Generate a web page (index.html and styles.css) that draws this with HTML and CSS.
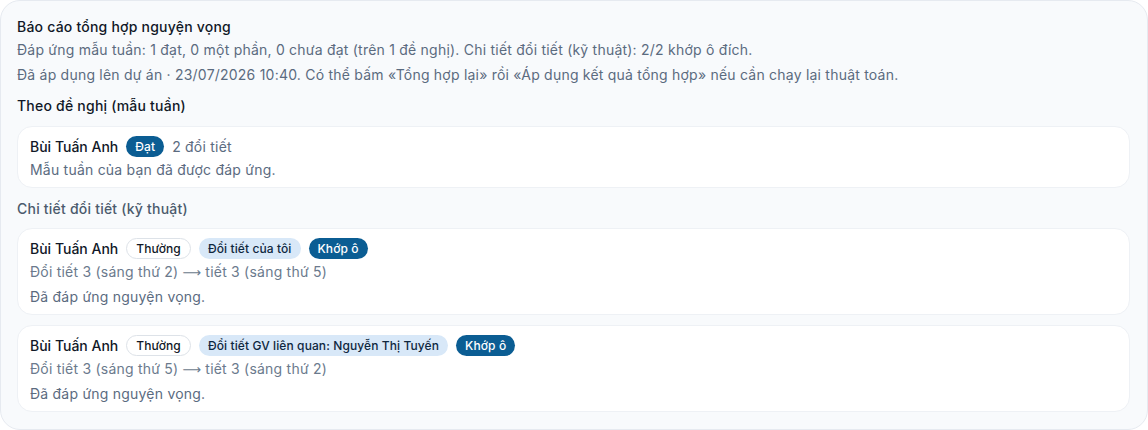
FILE: index.html
```html
<!DOCTYPE html>
<html lang="vi">
<head>
<meta charset="utf-8">
<link rel="stylesheet" href="styles.css">
</head>
<body>
<div class="panel">
  <div class="title">Báo cáo tổng hợp nguyện vọng</div>
  <div class="muted line">Đáp ứng mẫu tuần: 1 đạt, 0 một phần, 0 chưa đạt (trên 1 đề nghị). Chi tiết đổi tiết (kỹ thuật): 2/2 khớp ô đích.</div>
  <div class="muted line">Đã áp dụng lên dự án · 23/07/2026 10:40. Có thể bấm «Tổng hợp lại» rồi «Áp dụng kết quả tổng hợp» nếu cần chạy lại thuật toán.</div>
  <div class="section-title">Theo đề nghị (mẫu tuần)</div>
  <div class="card">
    <div class="row">
      <span class="name">Bùi Tuấn Anh</span>
      <span class="pill pill-dark">Đạt</span>
      <span class="count">2 đổi tiết</span>
    </div>
    <div class="muted line">Mẫu tuần của bạn đã được đáp ứng.</div>
  </div>
  <div class="section-title sub">Chi tiết đổi tiết (kỹ thuật)</div>
  <div class="card">
    <div class="row">
      <span class="name">Bùi Tuấn Anh</span>
      <span class="pill pill-outline">Thường</span>
      <span class="pill pill-light">Đổi tiết của tôi</span>
      <span class="pill pill-dark">Khớp ô</span>
    </div>
    <div class="muted line light">Đổi tiết 3 (sáng thứ 2) <span class="arrow">⟶</span> tiết 3 (sáng thứ 5)</div>
    <div class="muted line">Đã đáp ứng nguyện vọng.</div>
  </div>
  <div class="card">
    <div class="row">
      <span class="name">Bùi Tuấn Anh</span>
      <span class="pill pill-outline">Thường</span>
      <span class="pill pill-light">Đổi tiết GV liên quan: Nguyễn Thị Tuyến</span>
      <span class="pill pill-dark">Khớp ô</span>
    </div>
    <div class="muted line light">Đổi tiết 3 (sáng thứ 5) <span class="arrow">⟶</span> tiết 3 (sáng thứ 2)</div>
    <div class="muted line">Đã đáp ứng nguyện vọng.</div>
  </div>
</div>
</body>
</html>
```
FILE: styles.css
```css
* { box-sizing: border-box; }
html, body { margin: 0; padding: 0; background: #ffffff; }
body {
  font-family: Inter, "Noto Sans", sans-serif;
  font-size: 14px;
  letter-spacing: 0.22px;
  color: #111827;
}
.panel {
  width: 1148px;
  height: 430px;
  background: #f8fafc;
  border: 1px solid #e6eaf0;
  border-radius: 20px;
  padding: 16px 17px 17px 16px;
}
.title {
  font-size: 14px;
  font-weight: 500;
  line-height: 20px;
  color: #111827;
}
.line {
  line-height: 25px;
}
.card .line { line-height: 24px; }
.muted { color: #5b6b7f; }
.muted.light { color: #6b7a8d; }
.arrow {
  font-family: "DejaVu Sans", sans-serif;
  font-size: 13px;
  letter-spacing: 0;
}
.section-title {
  font-size: 14px;
  font-weight: 500;
  line-height: 22px;
  margin-top: 8px;
  margin-bottom: 9px;
  color: #111827;
}
.section-title.sub {
  color: #4b5a6d;
  margin-top: 2px;
  margin-bottom: 8px;
}
.card {
  background: #ffffff;
  border: 1px solid #eef1f5;
  border-radius: 15px;
  padding: 7px 12px 5px 12px;
  margin-bottom: 10px;
}
.row {
  display: flex;
  align-items: center;
  gap: 8px;
  height: 24px;
}
.name {
  font-weight: 500;
  color: #111827;
  letter-spacing: 0;
}
.count { color: #5b6b7f; }
.pill {
  display: inline-flex;
  align-items: center;
  height: 21px;
  padding: 0 9px;
  border-radius: 11px;
  font-size: 12px;
  font-weight: 500;
  letter-spacing: 0.1px;
}
.pill-dark {
  background: #0b5d93;
  color: #ffffff;
}
.pill-outline {
  background: #ffffff;
  border: 1px solid #dde2e8;
  color: #111827;
}
.pill-light {
  background: #d8e8f8;
  color: #0f2740;
}
```
